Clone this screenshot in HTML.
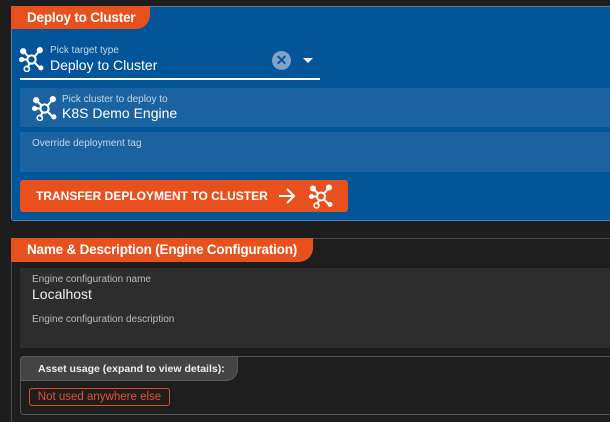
<!DOCTYPE html>
<html><head><meta charset="utf-8"><style>
*{box-sizing:border-box;margin:0;padding:0}
html,body{width:610px;height:422px;overflow:hidden}
body{background:#1d1d1d;font-family:"Liberation Sans",Arial,sans-serif;position:relative;color:#fff}
.abs{position:absolute}
.blue{left:11px;top:6px;width:610px;height:215px;background:#035599;border:1px solid #5a7fa8;border-right:none;border-radius:3px 0 0 3px}
.tab{background:#e8511e;color:#fff;font-weight:bold;font-size:13.5px;border-radius:0 0 14px 0;padding-left:16px;line-height:23px;white-space:nowrap;letter-spacing:-0.2px}
.lbl{font-size:10px;color:#c7d6e6}
.fld{background:#1a62a0}
.btn{left:20px;top:180px;width:328px;height:32px;background:#e8511e;border-radius:3px;font-size:12px;font-weight:bold;line-height:32px;padding-left:16px;white-space:nowrap}
.dark{left:11px;top:238px;width:610px;height:184px;border:1px solid #4a4a4a;border-right:none;border-bottom:none;background:#1e1e1e}
</style></head><body>
<svg width="0" height="0" style="position:absolute"><defs>
<g id="net" fill="#fff" stroke="#fff">
<circle cx="12" cy="13" r="4" fill="none" stroke-width="2"/>
<line x1="4" y1="5" x2="9" y2="10" stroke-width="2"/><line x1="20" y1="4" x2="15" y2="10" stroke-width="2"/>
<line x1="3" y1="13" x2="8" y2="13" stroke-width="2"/><line x1="15" y1="16" x2="20" y2="21" stroke-width="2"/>
<line x1="10" y1="17" x2="8" y2="21" stroke-width="2"/>
<circle cx="4" cy="5" r="3" stroke="none"/><circle cx="20" cy="4" r="3" stroke="none"/>
<circle cx="2.5" cy="13" r="2.5" stroke="none"/><circle cx="21" cy="21" r="2.5" stroke="none"/>
<circle cx="7.5" cy="22" r="2.5" fill="none" stroke-width="1.5"/>
</g></defs></svg>
<div class="abs blue"></div>
<div class="abs tab" style="left:11px;top:6px;width:139px;height:23px">Deploy to Cluster</div>
<svg class="abs" style="left:19px;top:46px" width="25" height="26" viewBox="0 0 24 25"><use href="#net"/></svg>
<div class="abs lbl" style="left:50px;top:45px">Pick target type</div>
<div class="abs" style="left:50px;top:57px;font-size:14px">Deploy to Cluster</div>
<div class="abs" style="left:272px;top:51px;width:19px;height:19px;border-radius:50%;background:#7fa3c9;color:#0a5597;font-size:14px;font-weight:bold;text-align:center;line-height:19px">✕</div>
<div class="abs" style="left:303px;top:58px;width:0;height:0;border-left:5px solid transparent;border-right:5px solid transparent;border-top:5px solid #fff"></div>
<div class="abs" style="left:20px;top:78px;width:300px;height:1.5px;background:#fff"></div>
<div class="abs fld" style="left:20px;top:88px;width:600px;height:39px"></div>
<svg class="abs" style="left:32px;top:95px" width="25" height="26" viewBox="0 0 24 25"><use href="#net"/></svg>
<div class="abs lbl" style="left:62px;top:94px">Pick cluster to deploy to</div>
<div class="abs" style="left:62px;top:105px;font-size:14px">K8S Demo Engine</div>
<div class="abs fld" style="left:20px;top:132px;width:600px;height:40px"></div>
<div class="abs lbl" style="left:32px;top:138px">Override deployment tag</div>
<div class="abs btn">TRANSFER DEPLOYMENT TO CLUSTER</div>
<svg class="abs" style="left:278px;top:188px" width="18" height="16" viewBox="0 0 18 16"><path d="M1 8H16M9 1L16 8L9 15" fill="none" stroke="#fff" stroke-width="2"/></svg>
<svg class="abs" style="left:309px;top:183px" width="24" height="26" viewBox="0 0 24 25"><use href="#net"/></svg>
<div class="abs dark"></div>
<div class="abs tab" style="left:11px;top:238px;width:302px;height:24px;line-height:24px">Name &amp; Description (Engine Configuration)</div>
<div class="abs" style="left:20px;top:268px;width:600px;height:80px;background:#2d2d2d"></div>
<div class="abs" style="left:32px;top:274px;font-size:10px;color:#bbb">Engine configuration name</div>
<div class="abs" style="left:32px;top:286px;font-size:14px;color:#eee">Localhost</div>
<div class="abs" style="left:32px;top:314px;font-size:10px;color:#bbb">Engine configuration description</div>
<div class="abs" style="left:20px;top:356px;width:600px;height:59px;border:1px solid #555;border-radius:4px"></div>
<div class="abs" style="left:20px;top:356px;width:218px;height:25px;background:#444;border:1px solid #5a5a5a;border-radius:4px 0 12px 0;font-size:10.5px;font-weight:bold;line-height:24px;padding-left:17px;color:#eee;white-space:nowrap">Asset usage (expand to view details):</div>
<div class="abs" style="left:29px;top:388px;width:141px;height:18px;border:1px solid #d9502a;border-radius:3px;color:#e0532d;font-size:11.5px;line-height:16px;text-align:center;white-space:nowrap">Not used anywhere else</div>
</body></html>
